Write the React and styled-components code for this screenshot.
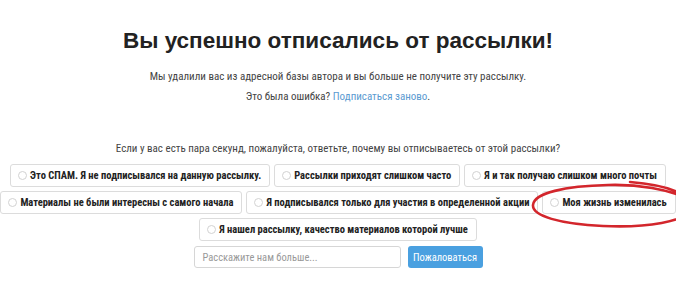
import React from "react";
import styled, { createGlobalStyle } from "styled-components";

const Global = createGlobalStyle`
  html, body { margin: 0; padding: 0; background: #fff; }
  body { font-family: Roboto, "Liberation Sans", Arial, sans-serif; font-stretch: condensed; color: #333; }
`;

const Page = styled.div`
  position: relative;
  width: 676px;
  height: 281px;
  display: flex;
  flex-direction: column;
  align-items: center;
  overflow: hidden;
`;

const Title = styled.h1`
  margin: 26px 0 0;
  font-family: "Liberation Sans", Arial, sans-serif;
  font-stretch: normal;
  font-weight: bold;
  font-size: 22.5px;
  line-height: 30px;
  color: #222;
`;

const Text = styled.p`
  margin: ${(p) => p.$mt}px 0 0;
  font-size: 11px;
  line-height: 14px;
  color: #444;
`;

const Link = styled.a`
  color: #5b9bd1;
  text-decoration: none;
`;

const Reasons = styled.div`
  margin-top: 8px;
  display: flex;
  flex-direction: column;
  align-items: center;
  gap: 4px;
`;

const Row = styled.div`
  display: flex;
  gap: 4px;
  justify-content: center;
`;

const Option = styled.label`
  display: flex;
  align-items: center;
  gap: 3px;
  height: 23px;
  box-sizing: border-box;
  padding: 0 8px 0 7px;
  border: 1px solid #dcdcdc;
  border-radius: 3px;
  background: #fff;
  font-size: 10.5px;
  font-weight: bold;
  font-stretch: 78.5%;
  color: #222;
  white-space: nowrap;
`;

const Radio = styled.span`
  width: 7px;
  height: 7px;
  border: 1px solid #d2d2d2;
  border-radius: 50%;
  background: #fff;
  flex: none;
`;

const Form = styled.div`
  display: flex;
  gap: 7px;
  margin-top: 5px;
`;

const Input = styled.div`
  width: 207px;
  height: 22px;
  box-sizing: border-box;
  border: 1px solid #d6d6d6;
  border-radius: 3px;
  padding: 0 8px;
  display: flex;
  align-items: center;
  font-size: 10.5px;
  color: #999;
`;

const Button = styled.div`
  width: 75px;
  height: 22px;
  box-sizing: border-box;
  border-radius: 3px;
  background: #4aa0e0;
  color: #fff;
  font-size: 10.5px;
  display: flex;
  align-items: center;
  justify-content: center;
`;

const Annotation = styled.svg`
  position: absolute;
  left: 0;
  top: 0;
  pointer-events: none;
`;

const rows = [
  [
    "Это СПАМ. Я не подписывался на данную рассылку.",
    "Рассылки приходят слишком часто",
    "Я и так получаю слишком много почты",
  ],
  [
    "Материалы не были интересны с самого начала",
    "Я подписывался только для участия в определенной акции",
    "Моя жизнь изменилась",
  ],
  ["Я нашел рассылку, качество материалов которой лучше"],
];

export default function App() {
  return (
    <>
      <Global />
      <Page>
        <Title>Вы успешно отписались от рассылки!</Title>
        <Text $mt={14}>
          Мы удалили вас из адресной базы автора и вы больше не получите эту рассылку.
        </Text>
        <Text $mt={6}>
          Это была ошибка? <Link href="#">Подписаться заново</Link>.
        </Text>
        <Text $mt={38}>
          Если у вас есть пара секунд, пожалуйста, ответьте, почему вы отписываетесь от этой рассылки?
        </Text>
        <Reasons>
          {rows.map((r, i) => (
            <Row key={i}>
              {r.map((t) => (
                <Option key={t}>
                  <Radio />
                  {t}
                </Option>
              ))}
            </Row>
          ))}
        </Reasons>
        <Form>
          <Input>Расскажите нам больше...</Input>
          <Button>Пожаловаться</Button>
        </Form>
        <Annotation width="700" height="281" viewBox="0 0 700 281">
          <path
            d="M630 182 C 668 185, 694 195, 691 208 C 688 222, 645 228, 603 226 C 560 224, 532 216, 533 205 C 534 193, 565 186, 608 185 C 640 184, 668 190, 684 197"
            fill="none"
            stroke="#d3262c"
            strokeWidth="2.6"
            strokeLinecap="round"
          />
        </Annotation>
      </Page>
    </>
  );
}
